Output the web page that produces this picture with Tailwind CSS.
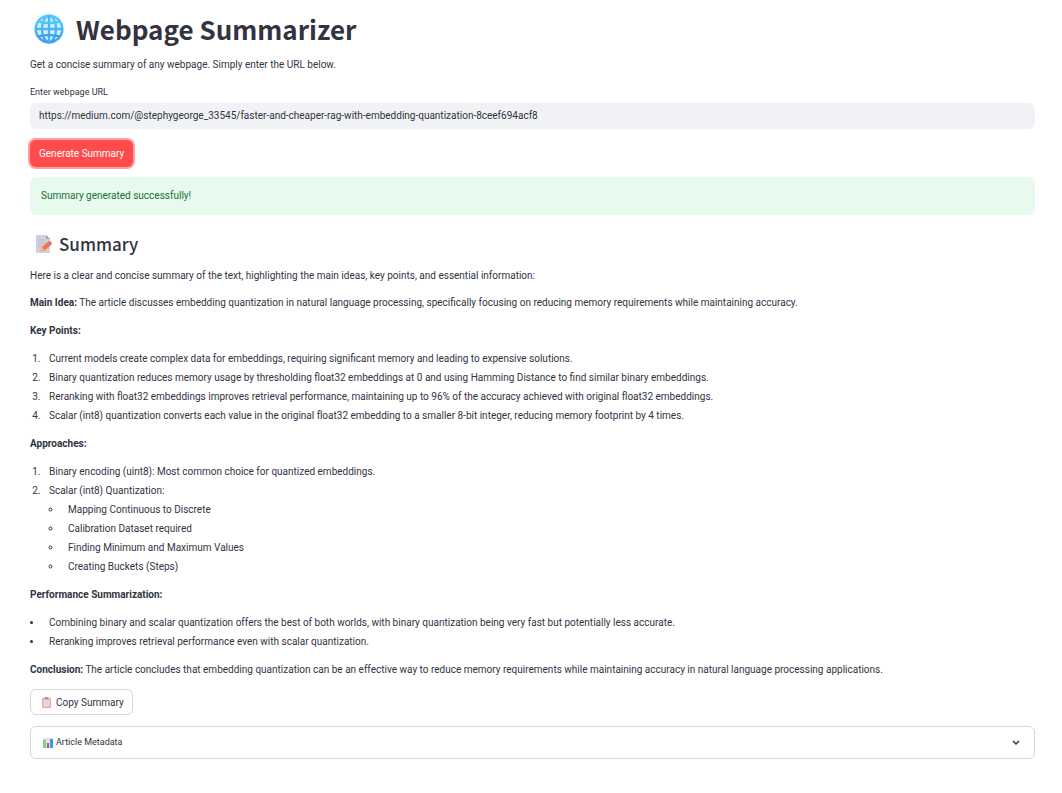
<!DOCTYPE html>
<html lang="en">
<head>
<meta charset="utf-8">
<meta name="viewport" content="width=device-width, initial-scale=1">
<title>Webpage Summarizer</title>
<script src="https://cdn.jsdelivr.net/npm/@tailwindcss/browser@4"></script>
</head>
<body class="bg-white text-[#31333f] font-['Roboto',sans-serif] text-[10px] leading-[17px]">
<main class="pl-[30px] pr-[27px] pt-[10px] pb-8">
  <h1 class="flex items-center gap-3 pl-1 font-['Noto_Sans_CJK_SC','Noto_Sans',sans-serif] text-[26px] leading-[38px] font-bold">
    <svg class="size-[30px] shrink-0" viewBox="0 0 30 30" fill="none" aria-hidden="true">
      <defs><linearGradient id="globe" x1="0" y1="0" x2="0" y2="1"><stop stop-color="#50caff"/><stop offset="1" stop-color="#3d9ff3"/></linearGradient></defs>
      <circle cx="15" cy="15" r="14.5" fill="#d8efff"/>
      <g stroke="url(#globe)" stroke-width="2.4"><circle cx="15" cy="15" r="13.3"/><ellipse cx="15" cy="15" rx="7" ry="13.300"/><path d="M13.800 1.500h2.400v27h-2.400zM1.500 13.800h27v2.400h-27z" stroke="none" fill="#47b4fa"/><path d="M4 7.500q11 3 22 0M4 22.500q11-3 22 0"/></g>
    </svg>
    Webpage Summarizer
  </h1>
  <p class="mt-2">Get a concise summary of any webpage. Simply enter the URL below.</p>
  <form>
    <label for="url" class="mt-[11px] block text-[9px] leading-4">Enter webpage URL</label>
    <input id="url" type="text" value="https://medium.com/@stephygeorge_33545/faster-and-cheaper-rag-with-embedding-quantization-8ceef694acf8" class="mt-[3px] block h-[26px] w-full rounded-md bg-[#f0f2f6] px-[9px] pb-[1px] outline-none">
    <button type="button" class="mt-[11px] block h-[27px] rounded-md bg-[#ff4b4b] px-[9px] text-white ring-2 ring-[#ff9f9f]">Generate Summary</button>
  </form>
  <div role="status" class="mt-[10px] rounded-md bg-[#e8f9ee] px-[11px] pt-[10px] pb-[11px] text-[#177233]">Summary generated successfully!</div>
  <h2 class="mt-[17px] flex items-center gap-[6px] pl-[5px] font-['Noto_Sans_CJK_SC','Noto_Sans',sans-serif] text-[17px] leading-6 font-medium">
    <svg class="size-[18px] shrink-0" viewBox="0 0 18 18" aria-hidden="true">
      <path d="M1 0h10l4 4v14H1z" fill="#d4cfdf"/><path d="M11 0v4h4z" fill="#a79bb8"/>
      <path d="M3 5h6M3 8h8M3 11h5" stroke="#bdb6cc"/>
      <path d="M6 15l1-3 6-5 3 3-7 6z" fill="#f9743f"/><path d="M13 7l2-1 2 3-1 1z" fill="#d9517b"/><path d="M5 17l2-5 3 3z" fill="#e8b58e"/>
    </svg>
    Summary
  </h2>
  <p class="mt-[11px]">Here is a clear and concise summary of the text, highlighting the main ideas, key points, and essential information:</p>
  <p class="mt-[10px]"><strong class="font-bold">Main Idea:</strong> The article discusses embedding quantization in natural language processing, specifically focusing on reducing memory requirements while maintaining accuracy.</p>
  <p class="mt-[11px]"><strong class="font-bold">Key Points:</strong></p>
  <ol class="mt-[11px] list-decimal space-y-[2px] pl-[13px]">
    <li class="pl-[6px]">Current models create complex data for embeddings, requiring significant memory and leading to expensive solutions.</li>
    <li class="pl-[6px]">Binary quantization reduces memory usage by thresholding float32 embeddings at 0 and using Hamming Distance to find similar binary embeddings.</li>
    <li class="pl-[6px]">Reranking with float32 embeddings improves retrieval performance, maintaining up to 96% of the accuracy achieved with original float32 embeddings.</li>
    <li class="pl-[6px]">Scalar (int8) quantization converts each value in the original float32 embedding to a smaller 8-bit integer, reducing memory footprint by 4 times.</li>
  </ol>
  <p class="mt-[11px]"><strong class="font-bold">Approaches:</strong></p>
  <ol class="mt-[11px] list-decimal space-y-[2px] pl-[13px]">
    <li class="pl-[6px]">Binary encoding (uint8): Most common choice for quantized embeddings.</li>
    <li class="pl-[6px]">Scalar (int8) Quantization:
      <ul class="mt-[2px] list-[circle] space-y-[2px] pl-[13px]">
        <li class="pl-[6px]">Mapping Continuous to Discrete</li>
        <li class="pl-[6px]">Calibration Dataset required</li>
        <li class="pl-[6px]">Finding Minimum and Maximum Values</li>
        <li class="pl-[6px]">Creating Buckets (Steps)</li>
      </ul>
    </li>
  </ol>
  <p class="mt-[11px]"><strong class="font-bold">Performance Summarization:</strong></p>
  <ul class="mt-[11px] list-disc space-y-[2px] pl-[13px]">
    <li class="pl-[6px]">Combining binary and scalar quantization offers the best of both worlds, with binary quantization being very fast but potentially less accurate.</li>
    <li class="pl-[6px]">Reranking improves retrieval performance even with scalar quantization.</li>
  </ul>
  <p class="mt-[11px]"><strong class="font-bold">Conclusion:</strong> The article concludes that embedding quantization can be an effective way to reduce memory requirements while maintaining accuracy in natural language processing applications.</p>
  <button type="button" class="mt-[11px] flex h-[26px] items-center gap-1 rounded-md border border-[#d6d6d9] pl-[10px] pr-2">
    <svg class="size-[11px] shrink-0" viewBox="0 0 11 11" aria-hidden="true"><rect x="1" y="1" width="9" height="10" rx="1" fill="#e6b08d"/><path d="M2.500 2.500h6v7h-6z" fill="#e6e0f0"/><path d="M3.500 0h4v2.500h-4z" fill="#a69bb8"/><path d="M3.500 5h4M3.500 7h4" stroke="#c9c2d8" stroke-width=".7"/></svg>
    Copy Summary
  </button>
  <details class="mt-[11px] rounded-md border border-[#d6d6d9]">
    <summary class="flex h-[31px] cursor-pointer list-none items-center gap-[3px] px-3 text-[9px]">
      <svg class="size-[10px] shrink-0" viewBox="0 0 10 10" aria-hidden="true"><path d="M0 0h10v10H0z" fill="#e4dff0"/><path d="M0 2h3v8H0z" fill="#6fdc7c"/><path d="M4 5h2v5H4z" fill="#e0406c"/><path d="M7 1h3v9H7z" fill="#3b9be8"/></svg>
      Article Metadata
      <svg class="ml-auto size-3 shrink-0" viewBox="0 0 12 12" fill="none" stroke="#31333f" stroke-width="1.500" aria-hidden="true"><path d="M3 4l3 3 3-3"/></svg>
    </summary>
    <p class="px-3 pb-3">medium.com</p>
  </details>
</main>
</body>
</html>
